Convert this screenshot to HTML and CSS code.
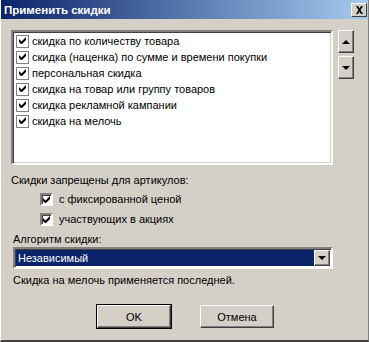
FILE: index.html
```html
<!DOCTYPE html>
<html lang="ru">
<head>
    <meta charset="UTF-8">
    <title>Применить скидки</title>
    <link rel="stylesheet" href="styles.css">
</head>
<body>
    <div class="window">
        <div class="titlebar">
            <span class="title">Применить скидки</span>
            <span class="close">
                <svg width="9" height="8" viewBox="0 0 9 8"><path d="M1 0h2l1.5 2.5L6 0h2L5.5 4 8 8H6L4.5 5.5 3 8H1l2.5-4z" fill="#000"/></svg>
            </span>
        </div>

        <div class="content">
            <div class="list-row">
                <div class="listbox">
                    <div class="item"><span class="check"></span>скидка по количеству товара</div>
                    <div class="item"><span class="check"></span>скидка (наценка) по сумме и времени покупки</div>
                    <div class="item"><span class="check"></span>персональная скидка</div>
                    <div class="item"><span class="check"></span>скидка на товар или группу товаров</div>
                    <div class="item"><span class="check"></span>скидка рекламной кампании</div>
                    <div class="item"><span class="check"></span>скидка на мелочь</div>
                </div>
                <div class="arrows">
                    <div class="btn arrow-btn"><span class="tri up"></span></div>
                    <div class="btn arrow-btn"><span class="tri down"></span></div>
                </div>
            </div>

            <div class="label">Скидки запрещены для артикулов:</div>
            <div class="option first"><span class="check box"></span>с фиксированной ценой</div>
            <div class="option"><span class="check box"></span>участвующих в акциях</div>

            <div class="label algo">Алгоритм скидки:</div>
            <div class="combo">
                <div class="combo-value">Независимый</div>
                <div class="btn combo-btn"><span class="tri down"></span></div>
            </div>
            <div class="note">Скидка на мелочь применяется последней.</div>

            <div class="buttons">
                <div class="btn push default">OK</div>
                <div class="btn push">Отмена</div>
            </div>
        </div>
    </div>
</body>
</html>
```

FILE: styles.css
```css
body {
    margin: 0;
    font-family: "Liberation Sans", Arial, sans-serif;
    font-size: 11px;
    color: #000;
    background: #d4d0c8;
}

.window {
    width: 369px;
    height: 342px;
    box-sizing: border-box;
    background: #d4d0c8;
    border-left: 1px solid #fff;
    border-bottom: 2px solid #404040;
    border-right: 1px solid #808080;
    display: flex;
    flex-direction: column;
}

.titlebar {
    height: 19px;
    background: linear-gradient(to right, #0a246a, #a6caf0);
    display: flex;
    align-items: center;
    justify-content: space-between;
    padding: 0 1px 0 3px;
}

.title {
    color: #fff;
    font-weight: bold;
    font-size: 11.5px;
}

.close {
    width: 14px;
    height: 12px;
    background: #d4d0c8;
    border: 1px solid;
    border-color: #fff #404040 #404040 #fff;
    display: flex;
    align-items: center;
    justify-content: center;
}

.content {
    padding: 11px 0 0 10px;
    display: flex;
    flex-direction: column;
}

.list-row {
    display: flex;
    gap: 5px;
}

.listbox {
    width: 315px;
    height: 130px;
    background: #fff;
    border: 2px solid;
    border-color: #808080 #fff #fff #808080;
    box-shadow: inset 1px 1px 0 #404040, inset -1px -1px 0 #d4d0c8;
    padding: 1px 0 0 3px;
    box-sizing: content-box;
}

.item {
    height: 16px;
    display: flex;
    align-items: center;
    white-space: nowrap;
}

.check {
    width: 11px;
    height: 11px;
    background: #fff;
    border: 1px solid #808080;
    margin-right: 3px;
    flex: none;
    position: relative;
}

.check::after {
    content: "";
    position: absolute;
    left: 2px;
    top: 1px;
    width: 7px;
    height: 7px;
    background: no-repeat center / 7px 7px url("data:image/svg+xml;utf8,<svg xmlns='http://www.w3.org/2000/svg' width='7' height='7' viewBox='0 0 7 7'><path d='M0 2v3l2 2h1l4-4V0L2.5 4.5z' fill='black'/></svg>");
}

.box {
    border-width: 2px;
    border-color: #808080 #fff #fff #808080;
    width: 9px;
    height: 9px;
    box-shadow: inset 1px 1px 0 #404040;
    margin-right: 6px;
}

.box::after {
    left: 1px;
    top: 1px;
}

.arrows {
    display: flex;
    flex-direction: column;
    gap: 3px;
}

.btn {
    background: #d4d0c8;
    border: 1px solid;
    border-color: #fff #404040 #404040 #fff;
    box-shadow: inset -1px -1px 0 #808080;
    box-sizing: border-box;
    display: flex;
    align-items: center;
    justify-content: center;
}

.arrow-btn {
    width: 16px;
    height: 23px;
}

.tri {
    width: 0;
    height: 0;
    border-left: 4px solid transparent;
    border-right: 4px solid transparent;
}

.tri.up {
    border-bottom: 4px solid #000;
}

.tri.down {
    border-top: 4px solid #000;
}

.label {
    margin-top: 8px;
    height: 15px;
    line-height: 15px;
}

.option {
    display: flex;
    align-items: center;
    height: 20px;
    padding-left: 29px;
}

.option.first {
    margin-top: 1px;
}

.algo {
    margin-top: 3px;
    padding-left: 2px;
}

.combo {
    margin: 0 0 0 2px;
    width: 320px;
    height: 22px;
    box-sizing: border-box;
    background: #fff;
    border: 2px solid;
    border-color: #808080 #fff #fff #808080;
    box-shadow: inset 1px 1px 0 #404040;
    display: flex;
    padding: 1px 1px 1px 1px;
}

.combo-value {
    flex: 1;
    background: #0a246a;
    color: #fff;
    line-height: 16px;
    padding-left: 2px;
}

.combo-btn {
    width: 16px;
    height: 16px;
}

.note {
    margin: 4px 0 0 2px;
    height: 15px;
    line-height: 15px;
}

.buttons {
    display: flex;
    gap: 29px;
    margin: 17px 0 0 86px;
}

.push {
    width: 74px;
    height: 23px;
}

.push.default {
    outline: 1px solid #000;
}
```
